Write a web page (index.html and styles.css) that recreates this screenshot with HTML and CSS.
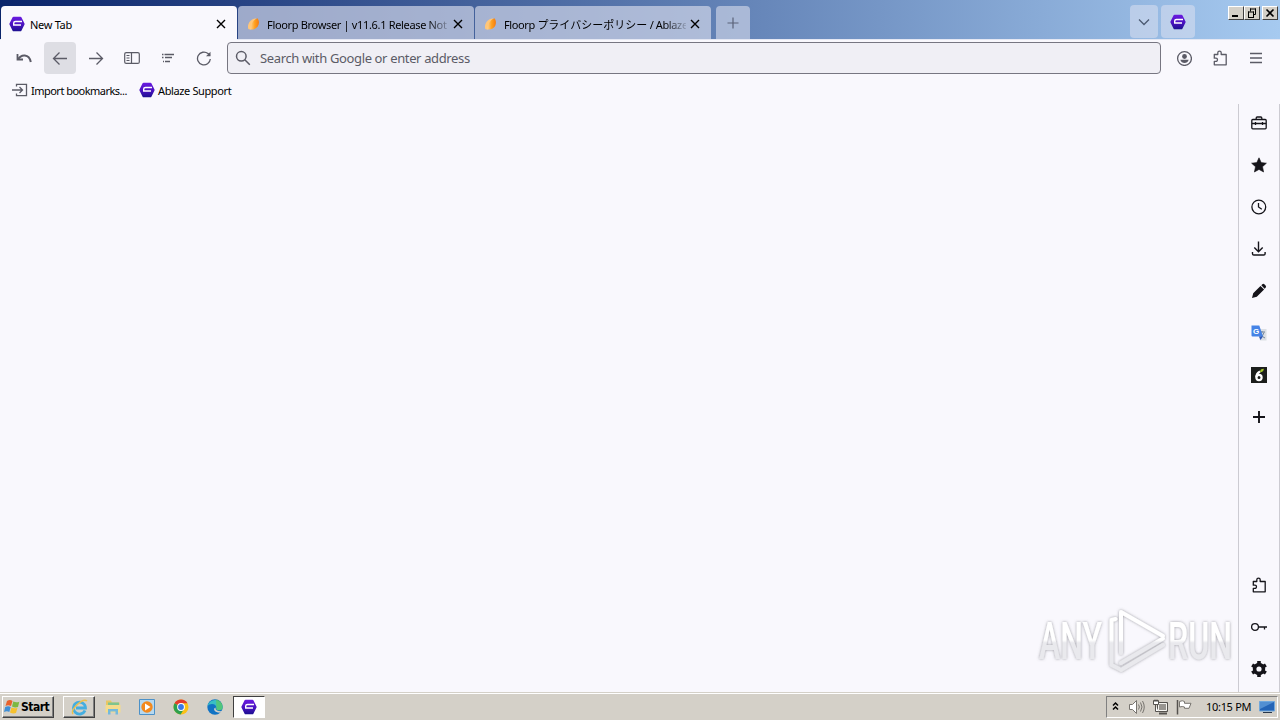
FILE: index.html
```html
<!DOCTYPE html>
<html lang="en">
<head>
    <meta charset="UTF-8">
    <meta name="viewport" content="width=device-width, initial-scale=1.0">
    <title>New Tab</title>
    <link rel="stylesheet" href="styles.css">
</head>
<body>
    <!-- shared icons -->
    <svg class="defs" width="0" height="0">
        <defs>
            <linearGradient id="hex" x1="0" y1="0" x2="0" y2="1">
                <stop offset="0" stop-color="#6a1be0"/>
                <stop offset="0.55" stop-color="#4a12c0"/>
                <stop offset="1" stop-color="#1c1090"/>
            </linearGradient>
            <linearGradient id="flame" x1="0" y1="0" x2="1" y2="0">
                <stop offset="0" stop-color="#ffd08a"/>
                <stop offset="0.5" stop-color="#ffa01e"/>
                <stop offset="1" stop-color="#f47a10"/>
            </linearGradient>
            <symbol id="floorp" viewBox="0 0 16 16">
                <path d="M4.500 .8h7q.6 0 .9.500L15.500 7.500q.2.500 0 1L12.400 14.700q-.3.500-.9.500h-7q-.6 0-.9-.5L.5 8.500q-.2-.5 0-1L3.600 1.300q.3-.5.900-.5z" fill="url(#hex)"/>
                <path d="M13 5.500H6.500Q4.700 5.500 4.700 7v2.500M12 9H4.100" fill="none" stroke="#fff" stroke-width="1.400"/>
            </symbol>
            <symbol id="ablaze" viewBox="0 0 16 16">
                <path d="M2.300 13C1 8 4.200 3 10 2.200 8.300 5 7 11 4.500 13.800z" fill="#ffc67a"/>
                <path d="M4.500 13.500C4.500 8 7 4 11.500 2.200 15 7 12 14 4.500 13.500z" fill="url(#flame)"/>
            </symbol>
            <symbol id="close" viewBox="0 0 10 10">
                <path d="M1 1l8 8M9 1L1 9" fill="none" stroke="currentColor" stroke-width="1.4"/>
            </symbol>
            <symbol id="puzzle" viewBox="0 0 16 16">
                <path d="M2.300 4.500h3.500V2.800a1.700 1.700 0 0 1 3.400 0v1.700h5v10.300H2.300v-3.400h1.600a1.600 1.600 0 0 0 0-3.200H2.300z" fill="none" stroke="currentColor" stroke-width="1.300" stroke-linejoin="round"/>
            </symbol>
        </defs>
    </svg>

    <div class="window">
        <header class="tabbar">
            <div class="tab active">
                <svg class="favicon"><use href="#floorp"/></svg>
                <span class="tab-title t-new">New Tab</span>
                <svg class="close"><use href="#close"/></svg>
            </div>
            <div class="tab">
                <svg class="favicon"><use href="#ablaze"/></svg>
                <span class="tab-title fade t-rel">Floorp Browser | v11.6.1 Release Not</span>
                <svg class="close"><use href="#close"/></svg>
            </div>
            <div class="tab">
                <svg class="favicon"><use href="#ablaze"/></svg>
                <span class="tab-title fade t-priv">Floorp <span class="jp">プライバシーポリシー</span> / Ablaze</span>
                <svg class="close"><use href="#close"/></svg>
            </div>
            <div class="newtab">
                <svg width="12" height="12"><path d="M6 .5v11M.5 6h11" stroke="#5a6278" stroke-width="1.200"/></svg>
            </div>
            <div class="tab-tools">
                <div class="tool"><svg width="12" height="8"><path d="M1 1.500l5 5 5-5" fill="none" stroke="#4c5a72" stroke-width="1.300"/></svg></div>
                <div class="tool"><svg width="16" height="16"><use href="#floorp"/></svg></div>
            </div>
            <div class="win-buttons">
                <span class="win-btn"><svg width="14" height="12"><path d="M3 9h6" stroke="#000" stroke-width="2"/></svg></span>
                <span class="win-btn"><svg width="14" height="12"><path d="M5 2h6M5.500 1.500v3M10.500 1.500v6M8.500 7.500h2M3 5h6M3.500 4.500v6M8.500 4.500v6M3 10.500h6" stroke="#000" fill="none"/></svg></span>
                <span class="win-btn last"><svg width="14" height="12"><path d="M3.500 2.500l7 7M10.500 2.500l-7 7" stroke="#000" stroke-width="1.600"/></svg></span>
            </div>
        </header>

        <div class="navbar">
            <div class="nav-btn"><svg width="16" height="16" fill="none" stroke="#5b5b66"><path d="M1.500 4v5.500H7" stroke-width="1.800"/><path d="M2 9.500C5 4 13 3.500 14.800 12" stroke-width="2"/></svg></div>
            <div class="nav-btn on"><svg width="16" height="16" fill="none" stroke="#5b5b66" stroke-width="1.300"><path d="M15 8.500H1.500M7.500 2.500L1.500 8.500l6 6"/></svg></div>
            <div class="nav-btn"><svg width="16" height="16" fill="none" stroke="#5b5b66" stroke-width="1.300"><path d="M1 8.500h13.500M8.500 2.500l6 6-6 6"/></svg></div>
            <div class="nav-btn"><svg width="16" height="16" fill="none" stroke="#5b5b66" stroke-width="1.200"><rect x=".7" y="2.600" width="14.600" height="10.800" rx="1.500"/><path d="M7.500 3v10M2.500 5.500h3M2.500 8h3M2.500 10.500h3"/></svg></div>
            <div class="nav-btn"><svg width="16" height="16" fill="none" stroke="#5b5b66" stroke-width="1.300"><path d="M2 4.500h1.500M4.500 4.500h9.500M2 7.500h1.500M5 7.500h7M3 11.500h1M5 11.500h5"/></svg></div>
            <div class="nav-btn"><svg width="16" height="16" fill="none" stroke="#5b5b66" stroke-width="1.300"><path d="M14.300 9A6.400 6.400 0 1 1 12 3.600L14 5.500"/><path d="M14.500 1.800v4.500H10z" fill="#5b5b66" stroke="none"/></svg></div>
            <div class="urlbar">
                <svg width="16" height="16" fill="none" stroke="#5b5b66" stroke-width="1.500"><circle cx="6.300" cy="6.300" r="4.800"/><path d="M9.800 9.800l5 5"/></svg>
                <span class="placeholder">Search with Google or enter address</span>
            </div>
            <div class="nav-right">
                <div class="nav-btn"><svg width="16" height="16"><circle cx="8.500" cy="8.500" r="6.900" fill="none" stroke="#5b5b66" stroke-width="1.300"/><circle cx="8.500" cy="6.500" r="2.400" fill="#5b5b66"/><path d="M4.300 9.800h8.400Q11.500 13 8.500 13T4.300 9.800z" fill="#5b5b66"/></svg></div>
                <div class="nav-btn gray"><svg width="16" height="16"><use href="#puzzle"/></svg></div>
                <div class="nav-btn"><svg width="16" height="16" stroke="#5b5b66" stroke-width="1.300"><path d="M2 3.500h12M2 8h12M2 12.500h12"/></svg></div>
            </div>
        </div>

        <div class="bookmarks">
            <div class="bookmark">
                <svg width="16" height="16" fill="none" stroke="#5b5b66" stroke-width="1.300"><path d="M4.500 4.500V2.300h10v11.400h-10v-2.200M0 8h10.500M7.500 5l3 3-3 3"/></svg>
                <span class="t-import">Import bookmarks...</span>
            </div>
            <div class="bookmark">
                <svg width="16" height="16"><use href="#floorp"/></svg>
                <span class="t-support">Ablaze Support</span>
            </div>
        </div>

        <div class="content">
            <main class="page">
                <svg class="watermark" width="204" height="72" viewBox="0 0 204 72">
                    <defs>
                        <linearGradient id="wm" gradientUnits="userSpaceOnUse" x1="0" y1="0" x2="0" y2="72">
                            <stop offset="0.5" stop-color="#ffffff"/>
                            <stop offset="0.54" stop-color="#e9e9ed"/>
                        </linearGradient>
                        <filter id="glow" x="-10%" y="-20%" width="120%" height="140%">
                            <feDropShadow dx="0" dy="0" stdDeviation="1.600" flood-color="#66666e" flood-opacity="0.65"/>
                        </filter>
                    </defs>
                    <g filter="url(#glow)">
                        <text class="wm-text" x="8" y="55" textLength="63" lengthAdjust="spacingAndGlyphs">ANY</text>
                        <text class="wm-text" x="137" y="55" textLength="64" lengthAdjust="spacingAndGlyphs">RUN</text>
                        <path d="M90 49V8l42 24M80.500 16v45l8 4M132 34.500L90 59M80.500 16l4-1M90 66l42-25" fill="none" stroke="url(#wm)" stroke-width="4" stroke-linejoin="round" stroke-linecap="round"/>
                    </g>
                </svg>
            </main>
            <aside class="sidebar">
                <div class="side-icon"><svg width="16" height="16" fill="none" stroke="#15141a" stroke-width="1.300"><rect x=".8" y="4.500" width="14.400" height="9.300" rx="1"/><path d="M5.200 4.500V3q0-1 1-1h3.600q1 0 1 1v1.500M1 8.500h14M4.500 7v3M11.500 7v3"/></svg></div>
                <div class="side-icon"><svg width="16" height="16"><path d="M8 .8l2.200 4.800 5.200.6-3.900 3.500 1.100 5.300L8 12.400 3.400 15l1.100-5.300L.6 6.200l5.200-.6z" fill="#15141a" stroke="#15141a" stroke-linejoin="round" stroke-width=".6"/></svg></div>
                <div class="side-icon"><svg width="16" height="16" fill="none" stroke="#15141a" stroke-width="1.300"><circle cx="7.800" cy="8" r="6.900"/><path d="M7.500 4v4l3.300 2.200"/></svg></div>
                <div class="side-icon"><svg width="16" height="16" fill="none" stroke="#15141a" stroke-width="1.400"><path d="M7.500 .5v10M3.300 6.500l4.200 4.200 4.200-4.200M1.500 11v1.700q0 1.300 1.300 1.300h10q1.300 0 1.300-1.300V11"/></svg></div>
                <div class="side-icon"><svg width="16" height="16" fill="#15141a"><path d="M1 15l1.200-4.800 7.300-7.300 3.600 3.600-7.300 7.300zM10.300 2.200l1-1q1.200-.8 2.300.2l1 1q1 1.200 0 2.300l-1 1z"/></svg></div>
                <div class="side-icon"><svg width="16" height="16"><path d="M6 4h9.500v11.500H9z" fill="#dcdfe4"/><path d="M8 7h6M11 6v1.500M13 7.500q-1 4-4 5M9.500 8.500q2 4 4.500 4.500" fill="none" stroke="#75869c"/><path d="M.5.500h7.800l3.700 11H1.500q-1 0-1-1z" fill="#4583e6"/><path d="M8 11.500h4L9.500 15z" fill="#3058b8"/><text x="2" y="9" class="gtext">G</text></svg></div>
                <div class="side-icon"><svg width="16" height="16"><path d="M0 0h16v16H0z" fill="#1c1e1c"/><path d="M9 4.500Q5.300 6.500 5.400 10.300" fill="none" stroke="#fff" stroke-width="2.200"/><circle cx="8" cy="10.500" r="2.600" fill="none" stroke="#fff" stroke-width="2.200"/><path d="M9 5.200q0-3.400 3.800-3.400 0 3.400-3.800 3.400z" fill="#a4c62c"/></svg></div>
                <div class="side-icon"><svg width="16" height="16"><path d="M8 2v12M2 8h12" stroke="#15141a" stroke-width="1.900"/></svg></div>
                <div class="side-icon bottom"><svg width="16" height="16"><use href="#puzzle"/></svg></div>
                <div class="side-icon"><svg width="16" height="16" fill="none" stroke="#15141a" stroke-width="1.300"><circle cx="4" cy="8" r="3.400"/><path d="M7.400 8H16M13.500 8v2.500"/></svg></div>
                <div class="side-icon"><svg width="16" height="16"><circle cx="8" cy="8" r="4.400" fill="none" stroke="#15141a" stroke-width="3.600"/><path d="M8 0v3.500M8 12.500V16M1.100 4l3 1.800M11.900 10.200l3 1.800M1.100 12l3-1.800M11.900 5.800l3-1.800" stroke="#15141a" stroke-width="3.600"/></svg></div>
            </aside>
        </div>
    </div>

    <footer class="taskbar">
        <div class="start">
            <svg width="17" height="16"><path d="M3 2q3-2 5.500 0L7 7Q4 5.500 1.500 7z" fill="#e8622c"/><path d="M9.300 2.500q3 1.500 6 .3L14 8q-3 1-6-.5z" fill="#7cb842"/><path d="M1.200 8q3-1.500 5.500 0L5.300 13Q3 11.500 0 13z" fill="#3f8fd6"/><path d="M7.500 8.500q3 1.500 6 .3L12 14q-3 1-6-.6z" fill="#f6c12e"/></svg>
            <span>Start</span>
        </div>
        <div class="task raised">
            <svg width="18" height="18"><path d="M15 12.500A6 6 0 1 1 15.500 10H6" fill="none" stroke="#45aee0" stroke-width="2.800"/><path d="M3 16C0 11.500 13-.5 17 3" fill="none" stroke="#eec04b" stroke-width="1.500"/></svg>
        </div>
        <div class="task">
            <svg width="18" height="18"><path d="M2 2.500h5l1 2h7.500V9H2z" fill="#e9c763"/><path d="M4 4.500h11v3H4z" fill="#7fc48e"/><path d="M1.500 7h15v7.500h-15z" fill="#f5dc8c"/><path d="M4 16.500V11h10v5.500h-2.500v-3h-5v3z" fill="#74b9dc"/></svg>
        </div>
        <div class="task">
            <svg width="18" height="18"><path d="M1.500 1.500h15v15h-15z" fill="#b6d8ef" stroke="#4c91c8"/><circle cx="9" cy="9" r="5.700" fill="#f3891d"/><path d="M7 5.500v7L12.500 9z" fill="#fff"/></svg>
        </div>
        <div class="task">
            <svg width="18" height="18"><circle cx="9" cy="9" r="7.500" fill="#fbc116"/><path d="M9 9L2.500 5.250A7.500 7.500 0 0 1 15.500 5.250H9z" fill="#e33b2e"/><path d="M9 9L2.500 5.250A7.500 7.500 0 0 0 8.600 16.500L12 11z" fill="#2da04e"/><circle cx="9" cy="9" r="3.900" fill="#fff"/><circle cx="9" cy="9" r="2.900" fill="#3b78e7"/></svg>
        </div>
        <div class="task">
            <svg width="18" height="18"><circle cx="9" cy="9" r="7.700" fill="#1173c4"/><path d="M1.500 8A7.700 7.700 0 0 1 16.700 9q-.2 3.500-4 3.300-3-.2-2.200-2.300Q10 6 6 6 3 6 1.500 8z" fill="#39bfc4"/><path d="M10 1.500Q16.500 3 16.700 9q-.2 3.500-4 3.300-3-.2-2.200-2.300z" fill="#5cc95e" opacity=".7"/><path d="M9.500 9.500q-.5 4 6 3.800l1.500-1.500v2l-2 1q-7 0-7-4z" fill="#d4d0c8"/></svg>
        </div>
        <div class="task current">
            <svg width="16" height="16"><use href="#floorp"/></svg>
        </div>
        <div class="tray">
            <svg class="chev" width="8" height="12"><path d="M1 4.500L3.500 2 6 4.500M1 8.500L3.500 6 6 8.500" fill="none" stroke="#000" stroke-width="1.500"/></svg>
            <svg class="vol" width="18" height="16" stroke="#77746f"><path d="M1.500 5.500h3l4-4v13l-4-4h-3z" fill="#fff"/><path d="M10.500 5.500q1.800 2.500 0 5M12.500 3.500q3 4.500 0 9M14.500 2q3.500 6 0 12" fill="none"/></svg>
            <svg class="net" width="18" height="16"><path d="M5.500 3.500h10v9h-10z" fill="#989590" stroke="#55524e"/><path d="M6.500 4.500h8v7h-8z" fill="none" stroke="#f5f4f0"/><path d="M7 14.500h8" stroke="#55524e" stroke-width="2"/><path d="M1.500 1.500h5v4h-5zM3.500 6v6.500h3" fill="#fff" stroke="#55524e"/><path d="M3 .5V3M5 .5V3" stroke="#55524e"/></svg>
            <svg class="flag" width="17" height="16"><path d="M3.500 2.500q3-1.500 5 0v1.800h6.500l-2 5H8.500V8q-2-1-5 0z" fill="#fff" stroke="#77746f"/><path d="M1.500 1v14.500" stroke="#55524e" stroke-width="1.500"/></svg>
            <span class="clock">10:15 PM</span>
            <svg class="desk" width="16" height="14"><path d="M.5 1.500h15V11H.5z" fill="#2464b6" stroke="#6fa7dc"/><path d="M1 2h14L1 9z" fill="#528fd2"/><path d="M4 12.500h9" stroke="#28364a"/></svg>
        </div>
    </footer>
</body>
</html>
```
FILE: styles.css
```css
* {
    box-sizing: border-box;
}
body {
    margin: 0;
    width: 1280px;
    height: 720px;
    overflow: hidden;
    display: flex;
    flex-direction: column;
    background-color: #d4d0c8;
    color: #000;
    font-family: "Noto Sans", "Noto Sans CJK JP", sans-serif;
    font-size: 11px;
    white-space: nowrap;
}
svg {
    display: block;
    flex: none;
}
.defs {
    position: absolute;
}
.window {
    height: 692px;
    display: flex;
    flex-direction: column;
    background-color: #f9f8fd;
}

/* tabs */
.tabbar {
    height: 40px;
    padding: 6px 2px 0 1px;
    display: flex;
    align-items: flex-start;
    background: linear-gradient(to right, #0a246a, #a6caf0);
    border-bottom: 1px solid #e4e7f3;
}
.tab {
    width: 236px;
    height: 33px;
    margin-right: 1px;
    padding: 0 11px 0 8px;
    display: flex;
    align-items: center;
    border-radius: 4px 4px 0 0;
    background-color: rgba(208, 213, 232, 0.7);
}
.tab.active {
    height: 34px;
    background-color: #f9f8fd;
}
.favicon {
    width: 16px;
    height: 16px;
    margin: 2px 5px 0 0;
}
.tab-title {
    width: 182px;
    margin: 3px 4px 0 0;
}
.fade {
    -webkit-mask-image: linear-gradient(to right, #000 88%, rgba(0, 0, 0, 0.15) 100%);
    mask-image: linear-gradient(to right, #000 88%, rgba(0, 0, 0, 0.15) 100%);
}
.close {
    width: 10px;
    height: 10px;
    margin-top: 2px;
}
.t-new {
    letter-spacing: -0.3px;
}
.t-rel {
    letter-spacing: -0.33px;
}
.t-priv {
    letter-spacing: -0.38px;
}
.jp {
    letter-spacing: 0;
}
.newtab {
    width: 34px;
    height: 33px;
    margin-left: 4px;
    display: flex;
    align-items: center;
    justify-content: center;
    border-radius: 4px 4px 0 0;
    background-color: rgba(208, 213, 232, 0.65);
}
.tab-tools {
    margin-left: auto;
    margin-top: -1px;
    display: flex;
    gap: 3px;
}
.tool {
    width: 28px;
    height: 33px;
    display: flex;
    align-items: center;
    justify-content: center;
    border-radius: 4px;
    background-color: rgba(225, 227, 242, 0.5);
}
.tool + .tool {
    width: 34px;
}
.win-buttons {
    margin-left: 33px;
    display: flex;
}
.win-btn {
    width: 16px;
    height: 14px;
    border: 1px solid;
    border-color: #fff #404040 #404040 #fff;
    background-color: #d4d0c8;
}
.win-btn.last {
    margin-left: 2px;
}

/* toolbar */
.navbar {
    height: 36px;
    padding: 0 8px;
    display: flex;
    align-items: center;
    gap: 4px;
}
.nav-btn {
    width: 32px;
    height: 32px;
    display: flex;
    align-items: center;
    justify-content: center;
    border-radius: 4px;
}
.nav-btn.on {
    background-color: #dedee4;
}
.nav-btn.gray {
    color: #5b5b66;
}
.urlbar {
    width: 934px;
    height: 32px;
    margin-left: 3px;
    padding-left: 7px;
    display: flex;
    align-items: center;
    gap: 9px;
    border: 1px solid #777681;
    border-radius: 4px;
    background-color: #f0eff5;
}
.placeholder {
    font-size: 13px;
    letter-spacing: -0.36px;
    color: #5b5b66;
}
.nav-right {
    margin-left: 3px;
    display: flex;
    gap: 4px;
}
.bookmarks {
    height: 28px;
    padding: 0 12px;
    display: flex;
    align-items: center;
    gap: 12px;
}
.bookmark {
    display: flex;
    align-items: center;
    gap: 3px;
}
.t-import {
    width: 96px;
    letter-spacing: -0.52px;
}
.t-support {
    letter-spacing: -0.38px;
}

/* page and sidebar */
.content {
    flex: 1;
    display: flex;
}
.page {
    flex: 1;
    display: flex;
    align-items: flex-end;
    justify-content: flex-end;
    padding: 0 3px 16px 0;
}
.wm-text {
    font: 500 52px Roboto, sans-serif;
    fill: url(#wm);
}
.sidebar {
    width: 42px;
    display: flex;
    flex-direction: column;
    border-left: 1px solid #cccbd2;
    border-right: 1px solid #cccbd2;
    color: #15141a;
}
.side-icon {
    height: 42px;
    padding-bottom: 4px;
    display: flex;
    align-items: center;
    justify-content: center;
}
.side-icon.bottom {
    margin-top: auto;
}
.gtext {
    font: bold 8px "Liberation Sans", sans-serif;
    fill: #fff;
}

/* taskbar */
.taskbar {
    height: 28px;
    padding: 2px 2px 1px 2px;
    display: flex;
    align-items: center;
    border-top: 1px solid #d4d0c8;
    box-shadow: inset 0 1px #fff;
}
.start {
    width: 52px;
    height: 22px;
    margin-right: 9px;
    padding-left: 1px;
    display: flex;
    align-items: center;
    border: 1px solid;
    border-color: #fff #404040 #404040 #fff;
    box-shadow: inset -1px -1px #808080;
    font: bold 12px "DejaVu Sans Condensed", sans-serif;
    letter-spacing: -0.5px;
}
.task {
    width: 32px;
    height: 22px;
    margin-right: 2px;
    display: flex;
    align-items: center;
    justify-content: center;
}
.task.raised {
    border: 1px solid;
    border-color: #fff #404040 #404040 #fff;
    box-shadow: inset -1px -1px #808080;
}
.task.current {
    border: 1px solid;
    border-color: #404040 #fff #fff #404040;
    background-color: #fff;
}
.tray {
    width: 172px;
    height: 22px;
    margin-left: auto;
    padding-left: 5px;
    display: flex;
    align-items: center;
    border: 1px solid;
    border-color: #808080 #fff #fff #808080;
}
.vol {
    margin-left: 8px;
}
.net {
    margin-left: 6px;
}
.flag {
    margin-left: 6px;
}
.clock {
    width: 46px;
    margin-left: 13px;
    padding-bottom: 1px;
    letter-spacing: -0.3px;
}
.desk {
    margin-left: 7px;
}
```
